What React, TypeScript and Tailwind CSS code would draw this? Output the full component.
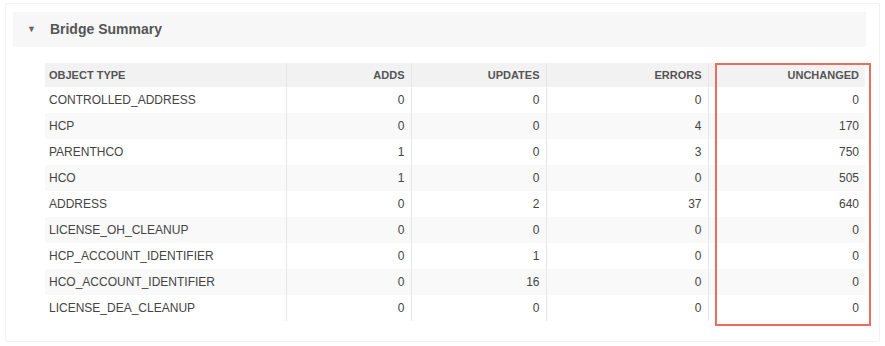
const rows: [string, number, number, number, number][] = [
  ["CONTROLLED_ADDRESS", 0, 0, 0, 0],
  ["HCP", 0, 0, 4, 170],
  ["PARENTHCO", 1, 0, 3, 750],
  ["HCO", 1, 0, 0, 505],
  ["ADDRESS", 0, 2, 37, 640],
  ["LICENSE_OH_CLEANUP", 0, 0, 0, 0],
  ["HCP_ACCOUNT_IDENTIFIER", 0, 1, 0, 0],
  ["HCO_ACCOUNT_IDENTIFIER", 0, 16, 0, 0],
  ["LICENSE_DEA_CLEANUP", 0, 0, 0, 0],
];

const cols = ["ADDS", "UPDATES", "ERRORS", "UNCHANGED"];

export default function App() {
  return (
    <div
      className="h-[346px] w-[885px] bg-white pl-[5px] pt-[3px]"
      style={{ fontFamily: '"Liberation Sans", Arial, sans-serif' }}
    >
      <div className="relative h-[339px] w-[875px] rounded-[2px] border border-[#f2f2f2] pl-[7px] pt-[8px]">
        {/* section header */}
        <div className="flex h-[35px] w-[853px] items-center bg-[#f7f7f7] pl-[14px]">
          <span className="mr-[14px] text-[9px] leading-none text-[#666]">▼</span>
          <h2 className="text-[14px] font-bold text-[#555]">Bridge Summary</h2>
        </div>

        <table className="ml-[32px] mt-[16px] w-[820px] table-fixed border-collapse text-[#444]">
          <colgroup>
            <col className="w-[241px]" />
            <col className="w-[125px]" />
            <col className="w-[135px]" />
            <col className="w-[162px]" />
            <col className="w-[157px]" />
          </colgroup>
          <thead>
            <tr className="h-[24px] bg-[#f2f2f2]">
              <th className="border-r border-[#e6e6e6] pl-[4px] text-left text-[11px] font-bold text-[#555]">
                OBJECT TYPE
              </th>
              {cols.map((c, i) => (
                <th
                  key={c}
                  className={
                    "pr-[6px] text-right text-[11px] font-bold text-[#555] " +
                    (i < 3 ? "border-r border-[#e6e6e6]" : "")
                  }
                >
                  {c}
                </th>
              ))}
            </tr>
          </thead>
          <tbody>
            {rows.map((r, idx) => (
              <tr key={r[0]} className={"h-[26px] " + (idx % 2 === 1 ? "bg-[#f9f9f9]" : "bg-white")}>
                <td className="border-r border-[#e6e6e6] pl-[4px] text-[12px]">{r[0]}</td>
                {r.slice(1).map((v, i) => (
                  <td
                    key={i}
                    className={
                      "pr-[6px] text-right text-[12px] " + (i < 3 ? "border-r border-[#e6e6e6]" : "")
                    }
                  >
                    {v}
                  </td>
                ))}
              </tr>
            ))}
          </tbody>
        </table>

        {/* highlight annotation */}
        <div className="pointer-events-none absolute left-[709px] top-[59px] h-[263px] w-[156px] border-2 border-[#ef6a5f]" />
      </div>
    </div>
  );
}
